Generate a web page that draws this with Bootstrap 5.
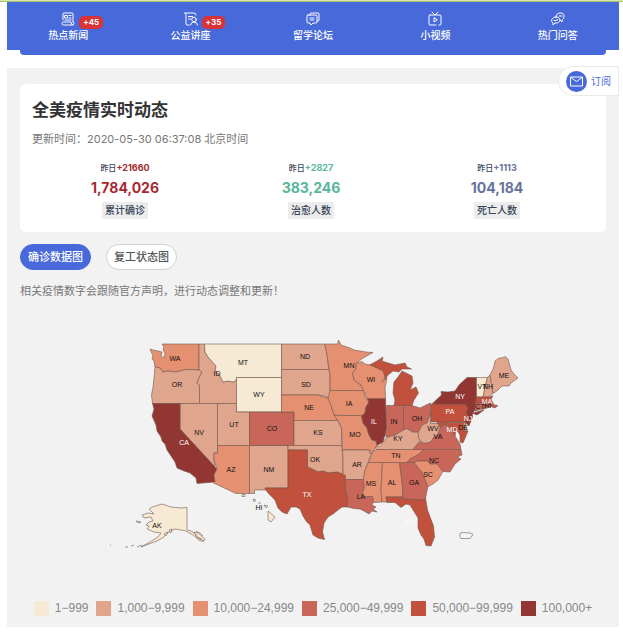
<!DOCTYPE html>
<html lang="zh-CN">
<head>
<meta charset="utf-8">
<meta name="viewport" content="width=device-width, initial-scale=1">
<title>全美疫情实时动态</title>
<link href="https://cdn.jsdelivr.net/npm/bootstrap@5.3.0/dist/css/bootstrap.min.css" rel="stylesheet">
<style>
:root{--brand:#4769d9;--panel:#f2f2f2}
body{font-family:Inter,"Noto Sans CJK SC",sans-serif;font-size:11px;line-height:16px;color:#333;background:#fff}
.topline{height:2px;background:#d5e8a4;border-bottom:1px solid #a9c07c}
.page-wrap{padding:0 4px 0 7px}
.mainnav{background:var(--brand);height:48px;padding-top:9px}
.mainnav a{color:#fff;font-size:10px;font-weight:500;line-height:14px;text-decoration:none}
.mainnav svg{width:16px;height:16px;display:block;margin:0 auto 1px}
.ico{fill:none;stroke:currentColor;stroke-width:1;stroke-linejoin:round;stroke-linecap:round}
.count-badge{position:absolute;left:calc(50% + 11px);top:5px;background:#d93237;font-size:8px;font-weight:700;line-height:13px;padding:0 4px;border-radius:5px}
.nav-foot{height:5px;margin:0 13px;background:var(--brand);border-radius:0 0 4px 4px}
.panel{background:var(--panel);margin-top:13px;padding:16px 13px 11px}
.subscribe{position:absolute;right:0;top:-2px;height:30px;padding:0 7px;gap:4px;background:#fff;border:1px solid #e9e9e9;border-radius:15px 0 0 15px;color:var(--brand);font-size:10px;text-decoration:none}
.subscribe svg{width:21px;height:21px}
.summary{border-radius:6px;padding:15px 16px 13px 12px}
.summary h1{font-size:17px;line-height:22px;font-weight:600;margin:0 0 10px}
.stamp{color:#777;margin:0 0 15px}
.delta{font-size:8px;line-height:12px;font-weight:500;color:#374458}
.delta span{font-size:9px;font-weight:700}
.total{font-size:14px;line-height:16px;font-weight:700;margin:6px 0 6px}
.tag-name{background:#ececec;color:#374458;font-size:10px;font-weight:500;line-height:17px;padding:0 3px}
.c-red{color:#a62a32}.c-green{color:#57b69c}.c-slate{color:#66739a}
.pill-row{gap:15px}
.pill{font-size:11px;font-weight:500;line-height:16px;padding:4px 7px;border-radius:13px;--bs-btn-color:#555;--bs-btn-bg:#fff;--bs-btn-border-color:#d2d2d2}
.pill.active{--bs-btn-active-bg:var(--brand);--bs-btn-active-color:#fff;--bs-btn-active-border-color:var(--brand)}
.hint{color:#777;margin:13px 0 0}
.usmap{display:block;width:calc(100% + 26px);margin:0 -13px;font:7px "Liberation Sans",Arial,sans-serif;text-anchor:middle;fill:#111}
.usmap .states{stroke:#74574d;stroke-width:.6;stroke-linejoin:round}
.k1{fill:#f7ead5}.k2{fill:#dfa58d}.k3{fill:#e59070}.k4{fill:#c8665a}.k5{fill:#c1503c}.k6{fill:#923633}
.legend-row{font:12px/16px "Liberation Sans",Arial,sans-serif;color:#888;gap:4px 8px}
.legend-row svg{width:15px;height:15px;margin-right:6px}
</style>
</head>
<body>
<div class="topline"></div>
<div class="page-wrap">
<nav class="mainnav"><div class="row g-0 text-center">
<div class="col position-relative"><a href="#" class="d-block"><svg class="ico" viewBox="0 0 16 16"><path d="M3 9V3q0-1 1-1h8q1 0 1 1v8M13 11q1 0 1 1.500T12.500 14h-9Q2 14 2 12.500T3.500 11H11q0 3 1.500 3M5 4.500h2.500V7H5zM9 4.500h2M9 7h2M5 9h6"/></svg>热点新闻<span class="count-badge">+45</span></a></div>
<div class="col position-relative"><a href="#" class="d-block"><svg class="ico" viewBox="0 0 16 16"><path d="M6 14H4q-1 0-1-1V4Q3 2 1.500 2H11q2 0 2 2M5.500 5.500h4M5.500 8h2"/><circle cx="11" cy="8.500" r="2.300"/><path d="M7.500 14q.500-3 3.500-3t3.500 3"/></svg>公益讲座<span class="count-badge">+35</span></a></div>
<div class="col"><a href="#" class="d-block"><svg class="ico" viewBox="0 0 16 16"><path d="M5 4V3q0-1 1-1h7q1 0 1 1v6q0 1-1 1h-1M3 4h8q1 0 1 1v6q0 1-1 1H8l-2 2-1-2H3q-1 0-1-1V5q0-1 1-1zM5 7h4M5 9h4"/></svg>留学论坛</a></div>
<div class="col"><a href="#" class="d-block"><svg class="ico" viewBox="0 0 16 16"><path d="M3 4h10q1 0 1 1v8q0 1-1 1h-1M9 14H3q-1 0-1-1V5q0-1 1-1M5 1l3 3 3-3M7 7v4l3-2z"/></svg>小视频</a></div>
<div class="col"><a href="#" class="d-block"><svg class="ico" viewBox="0 0 16 16"><path d="M6 6c0-3 2-4 4-4 3 0 4 1 4 3 0 3-1 3-2 4v2l-2-2M6 6c2 0 4 1 4 3s-2 3-4 3H5l-2 2v-2C0 10 2 6 6 6zM4 9.500q2 1 4-1M9 5q2 0 3 0"/></svg>热门问答</a></div>
</div></nav>
<div class="nav-foot"></div>
<main class="panel position-relative">
<a href="#" class="subscribe d-flex align-items-center"><svg viewBox="0 0 21 21"><circle cx="10.500" cy="10.500" r="10.500" fill="#4769d9"/><path d="M4.500 6h12v9h-12zM5 6.500l5.500 4 5.500-4" fill="none" stroke="#fff"/></svg>订阅</a>
<section class="summary bg-white">
<h1>全美疫情实时动态</h1>
<p class="stamp">更新时间：2020-05-30 06:37:08 北京时间</p>
<div class="row g-0 text-center">
<div class="col"><div class="delta">昨日<span class="c-red">+21660</span></div><div class="total c-red">1,784,026</div><div class="tag-name d-table mx-auto">累计确诊</div></div>
<div class="col"><div class="delta">昨日<span class="c-green">+2827</span></div><div class="total c-green">383,246</div><div class="tag-name d-table mx-auto">治愈人数</div></div>
<div class="col"><div class="delta">昨日<span class="c-slate">+1113</span></div><div class="total c-slate">104,184</div><div class="tag-name d-table mx-auto">死亡人数</div></div>
</div>
</section>
<div class="pill-row d-flex mt-2 pt-1"><button type="button" class="btn pill active">确诊数据图</button><button type="button" class="btn pill">复工状态图</button></div>
<p class="hint">相关疫情数字会跟随官方声明，进行动态调整和更新！</p>
<svg class="usmap" viewBox="7 299 612 301" role="img" aria-label="美国各州确诊数据图">
<g class="states">
<path class="k3" d="M162 344H199V370L186 369.500 176 372 168 371 163 372 160 368 155 367 154 361 152 359 153 356 150 349 153 350 158 351 162 352 161 356 164 358 165 353 163 350 164 347Z"/>
<path class="k2" d="M155 367L160 368 163 372 168 371 176 372 186 369.500 199 370 202 372 199 378 197 383 199.500 385V403.500H152.500L151.500 395 153 387 154 378Z"/>
<path class="k2" d="M199 344H204.500L205 352 208 357 211.500 361 216 366 215 372 219 374 223 382 228 381 234 382 236.500 378V403.500H199.500V385L197 383 199 378 202 372 199 370Z"/>
<path class="k1" d="M204.500 344H281.500V377.500H236.500V379L234 382 228 381 223 382 219 374 215 372 216 366 211.500 361 208 357 205 352Z"/>
<path class="k1" d="M236.500 377.500H281.500V412H236.500Z"/>
<path class="k2" d="M217.500 403.500H236.500V412H249.500V445.500H217.500Z"/>
<path class="k2" d="M180 403.500H217.500V453H214V460L215 467 180 429Z"/>
<path class="k6" d="M152.500 403.500H180V429L215 467 217 469 214 475 215 482 197 483.500 196 478 190 473 184 471 177 468 175 462 171 456 167 450 165 444 162 441 161 437 157 431 156 425 152 416 154 409Z"/>
<path class="k3" d="M217.500 445.500H249.500V493.500H236L213.500 483 215 482 214 475 217 469 214 460V453H217.500Z"/>
<path class="k2" d="M249.500 445.500H288V488H265.500V490H254.500V493.500H249.500Z"/>
<path class="k4" d="M249.500 412H294V445.500H249.500Z"/>
<path class="k2" d="M281.500 344H325L327 355 329 369.500H281.500Z"/>
<path class="k2" d="M281.500 369.500H329L330 375V391L329 398 324 396 318 395 281.500 395Z"/>
<path class="k3" d="M281.500 395H318L328 398 331 405 334 415 338 420.500H294V412H281.500Z"/>
<path class="k2" d="M294 420.500H338L341.500 428V445.500H294Z"/>
<path class="k2" d="M288 445.500H341.500L343 460V475L337 472 333 473 328 473 323 471 318 472 312 469 307.500 467V450H288Z"/>
<path class="k5" d="M288 450H307.500V467L312 469 318 472 323 471 328 473 337 472 345.500 475V490L348 498 347 507 342 507 338 510 333 514 328 517 324 523 322.500 532 324.500 539.500 318 538 313 535 310 525 306 521 303 516 300 509 296 507 291 507 287 514 282 512 278 508 275 500 269 494 265 489V488H288Z"/>
<path class="k3" d="M325 344H337.500L338.500 340 341 345 350 348 354 350 360 351 366 352 373 352.500 363 358 356 363.500V369L352.500 373 354 380 361 385 363.500 390.500H330V375L329 369.500 327 355Z"/>
<path class="k3" d="M330 390.500H363.500L365 397 369 402 366 407 365 413 361.500 416 334 415 331 405 328 398Z"/>
<path class="k3" d="M334 415.500H361.500L363 423 367 428 369 435 372 440 376 441 377 445.500 374.500 449 371.500 454 369.500 450H342.500L341.500 428 338 420.500Z"/>
<path class="k2" d="M342.500 450H369.500V453.500H372L368.500 461 365 470 363.500 479.500H345.500V475H343V460Z"/>
<path class="k4" d="M345.500 479.500H363.500L364.500 487 361.500 496.500H372.500L373.500 502 372 505 376 507 373 509 377 512 372 511 369 514 364 511 360 509 354 508.500 347 507 348 498 345.500 490Z"/>
<path class="k3" d="M368.500 462.500H382.500L381 490 382 502 374 502.500 372.500 496.500H361.500L364.500 487 363.500 479.500 365 470Z"/>
<path class="k3" d="M382.500 462.500H399.500L402.500 486V497H386L387 502 382 502 381 490Z"/>
<path class="k4" d="M399.500 462.500H414L422 472 428 486 425.500 498 423 500 403 499 402.500 486Z"/>
<path class="k5" d="M386 497H402.500L403 499 423 500 425.500 498 427.500 510 433.500 526 434.500 537 431 546 426 545.500 424 539 421 535 418 528 418 518 410 505 406 504 401 507.500 395 502.500 387 502.500Z"/>
<path class="k3" d="M373.500 450.500H376V449.500H423.500L418 455 410 459 407 462.500H368.500L371.500 454Z"/>
<path class="k4" d="M423.500 449.500H461L462 455 457 457 461 459 455 464 450 472 443 471.500 437 464H430L427.500 461H418L414 462.500H407L410 459 418 455Z"/>
<path class="k3" d="M414 462.500L418 461H427.500L430 464H437L443 471.500 438 480 433 484 428 486.500 422 472Z"/>
<path class="k2" d="M376 449.500L375 447 380 446 383 442 387 437 395 435 402 429 407 428.500 413 432 418 431.500 420 440 413 449.500Z"/>
<path class="k6" d="M367 398.500H385.500L386.500 428 385 435 383 442 377 445.500 376 441 372 440 369 435 367 428 363 423 361.500 416 365 413 366 407 369 402Z"/>
<path class="k4" d="M386.500 405.500H403.500V430L395 435 386.500 437 385 435 386.500 428Z"/>
<path class="k4" d="M403.500 405.500H412L420 408 430.500 403V413.500L427 423 419.500 432 413 432 407 428.500 403.500 430Z"/>
<path class="k5" d="M394 405.500H412L414 400 418.500 393 416 387 410 390 413 383 412 376 402 371 398 377 394 382 393 393 395 400Z"/>
<path class="k5" d="M369.500 365L377 361 383 357 382 361 385 362 395 365 405 363 407 367 411.500 369 402 369 399 372 393 371 388 375 385 380 383 371Z"/>
<path class="k3" d="M356 363.500L362 361.500 365 364 370 365 377 368 383 371 385 377 382 382 387 378 385 388 385.500 398.500H367L363.500 390.500 361 385 354 380 352.500 373 356 369Z"/>
<path class="k2" d="M418 433L422 425 427 423 430.500 413.500V423.500H437L440 422.500 446 422.500 440 428 438 435 433 438 430 443 423 443.500 419 439Z"/>
<path class="k4" d="M413 449.500L420 441.500 425 443.500 431 442 434 437 438 435 440 428 446 424 451 428 455 436 460 444 461 449.500Z"/>
<path class="k5" d="M431 404.500L434 402 434.500 404H465L468 408 466 413 469 417 464.500 422H431Z"/>
<path class="k5" d="M437 422.500H464L465 431 468 431 463 443 460 442 460 435 456 429 455 436 451 428 446 424 440 427Z"/>
<path class="k3" d="M463 423L465 422 467 431H464Z"/>
<path class="k6" d="M434 402L441.500 395 441 391.500 448 392 455 391 459 385 467 377.500H476.500V397L475 410 473 413 484 410 477 415 472 413 465 404H434.500Z"/>
<path class="k6" d="M465 404L472.500 412V417L469 426 464.500 422 469 417 466 413 468 408Z"/>
<path class="k1" d="M476.500 377.500H487.500L485 387 483 397H476.500Z"/>
<path class="k2" d="M487.500 377.500L490 375 493 393 490 397H483L485 387Z"/>
<path class="k2" d="M490 375L493.500 368 495 361 499 358 502 358 505 356.500 508 359 511 370 514 374 518 378 511 383 509 386 502 386 498 390 494 393 493 393Z"/>
<path class="k5" d="M476.500 397H490L493 396 491 399 494 405 498 405.500 495 408 490 406 488.500 403H475.500Z"/>
<path class="k4" d="M475.500 403H485V408.500L475 411Z"/><path class="k5" d="M485 403H488.500L490 407 485 408.500Z"/>
<path class="k1" d="M187 507.500V530L191 531 197 535 204 541 200 541 193 535 186 531 181 530 175 529 167 533 164 537 157 541 149 544 141 547 150 542 158 537 161 533 154 532 147 529 149 526 146 525 149 522 153 521 151 517 144 518 142 515 148 513 154 514 149 509 152 507 162 504 171 507 181 508Z"/>
<path class="k1" d="M194 532l4 1 7 6-1 2-6-3zM196 531l4 2 3 3M195 535l3 3 4 1M164 534l4-2-2 4zM169 530l3-1-1 4zM136 521l5 1-3 1zM110 545l1 0M125 547l3 0M131 546l3-1M137 547l5-2M242 494.500h3v2h-3zM253 499l3 1-2 2zM258 503h3M264 505l4 1-2 2zM268 511l7 6-4 5-3-2z"/>
<path fill="#f4f4f4" d="M460 533.500l2-1 8 .500 3 1.500-3 4h-9l-1-2z"/>
</g>
<g><text x="175" y="361">WA</text><text x="177" y="387">OR</text><text x="217" y="376">ID</text><text x="243" y="365">MT</text><text x="259" y="397">WY</text><text x="199" y="435">NV</text><text x="234" y="427">UT</text><text x="272" y="431">CO</text><text x="231" y="472">AZ</text><text x="269" y="472">NM</text><text x="305" y="359">ND</text><text x="306" y="387">SD</text><text x="309" y="410">NE</text><text x="318" y="435">KS</text><text x="315" y="462">OK</text><text x="349" y="368">MN</text><text x="349" y="406">IA</text><text x="355" y="437">MO</text><text x="357" y="467">AR</text><text x="361" y="499">LA</text><text x="371" y="382">WI</text><text x="394" y="424">IN</text><text x="417" y="421">OH</text><text x="398" y="441">KY</text><text x="396" y="458">TN</text><text x="371" y="486">MS</text><text x="392" y="485">AL</text><text x="414" y="485">GA</text><text x="428" y="477">SC</text><text x="434" y="463">NC</text><text x="438" y="439">VA</text><text x="433" y="431">WV</text><text x="504" y="378">ME</text><text x="482" y="389">VT</text><text x="488" y="389">NH</text><text x="480" y="409">CT</text><text x="488" y="408">RI</text><text x="463" y="430">DE</text><text x="157" y="528">AK</text><text x="259" y="510">HI</text></g>
<g fill="#fff"><text x="184" y="445">CA</text><text x="307" y="497">TX</text><text x="374" y="424">IL</text><text x="450" y="414">PA</text><text x="460" y="399">NY</text><text x="468" y="421">NJ</text><text x="487" y="404">MA</text><text x="452" y="432">MD</text><text x="410" y="523">FL</text></g>
</svg>
<div class="legend-row d-flex flex-wrap justify-content-center">
<span class="d-flex align-items-center"><svg><rect class="k1" width="15" height="15"/></svg>1−999</span>
<span class="d-flex align-items-center"><svg><rect class="k2" width="15" height="15"/></svg>1,000−9,999</span>
<span class="d-flex align-items-center"><svg><rect class="k3" width="15" height="15"/></svg>10,000−24,999</span>
<span class="d-flex align-items-center"><svg><rect class="k4" width="15" height="15"/></svg>25,000−49,999</span>
<span class="d-flex align-items-center"><svg><rect class="k5" width="15" height="15"/></svg>50,000−99,999</span>
<span class="d-flex align-items-center"><svg><rect class="k6" width="15" height="15"/></svg>100,000+</span>
</div>
</main>
</div>
<script src="https://cdn.jsdelivr.net/npm/bootstrap@5.3.0/dist/js/bootstrap.bundle.min.js"></script>
</body>
</html>
